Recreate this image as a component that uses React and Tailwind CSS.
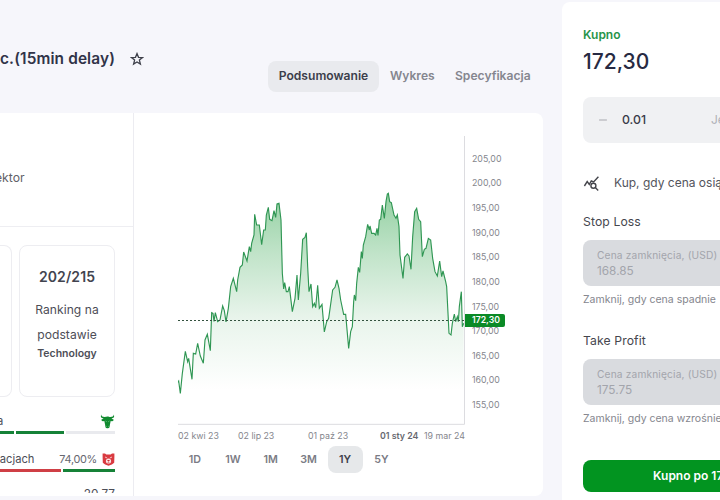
import React from "react";
import { Minus } from "lucide-react";

const PRICE_POINTS =
  "38,607 41,603 46,640 52,580 61,514 68,545 71,535 81,598 85,520 92,522 98,490 106,528 115,550 120,480 127,463 136,512 140,398 144,400 147,424 151,398 158,425 165,420 173,378 178,392 183,426 190,385 197,320 205,295 215,335 218,300 225,262 232,255 236,216 246,243 253,200 257,215 260,190 267,165 269,103 275,135 283,135 290,194 296,150 301,150 304,105 310,82 314,118 321,122 327,92 332,112 336,72 342,70 348,120 352,280 356,327 359,308 364,335 369,335 373,320 382,395 390,355 396,285 400,360 407,280 413,178 420,172 424,158 428,260 432,335 438,312 443,380 448,370 452,383 458,316 463,385 471,373 478,456 485,425 491,415 503,330 510,322 516,300 522,325 527,360 536,403 542,403 551,505 557,455 562,440 566,365 568,345 572,362 575,310 580,262 584,277 589,215 592,235 595,195 602,170 608,133 613,150 615,138 620,160 627,160 632,165 636,145 639,166 643,120 647,118 652,75 658,115 663,65 667,42 670,40 674,65 679,68 687,105 693,115 697,105 702,140 705,225 714,295 719,232 727,222 732,228 738,268 743,170 749,95 755,85 761,118 767,125 772,230 778,208 783,205 790,175 797,180 803,235 810,275 817,288 824,243 830,290 834,273 842,305 845,320 849,400 852,460 858,465 862,430 868,402 872,425 877,410 880,425 883,380 889,335 892,440 896,430";

const PRICES = [
  "205,00",
  "200,00",
  "195,00",
  "190,00",
  "185,00",
  "180,00",
  "175,00",
  "170,00",
  "165,00",
  "160,00",
  "155,00",
];

const RANGES = ["1D", "1W", "1M", "3M", "1Y", "5Y"];

function StarIcon() {
  return (
    <svg
      className="ml-[15px] h-[14px] w-[14px]"
      viewBox="0 0 14 14"
      fill="none"
      stroke="#3e404a"
      strokeWidth="1.3"
    >
      <path d="M7 1.6L8.5 5.3L12.5 5.6L9.4 8.1L10.4 12L7 9.9L3.6 12L4.6 8.1L1.5 5.6L5.5 5.3Z" />
    </svg>
  );
}

function BullIcon() {
  return (
    <svg className="h-[15px] w-[15px]" viewBox="0 0 15 15" fill="#108a2f">
      <path d="M1.3 0.6C0.2 2.6 1 4.3 3.6 4.6L1.2 5.7C1.8 7 3 7.3 4.3 7.1L5 10.2L5.5 13.2C6.2 14.6 8.8 14.6 9.5 13.2L10 10.2L10.7 7.1C12 7.3 13.2 7 13.8 5.7L11.4 4.6C14 4.3 14.8 2.6 13.7 0.6C13.6 2.4 12.4 3 10.3 3C9.3 3 8.6 2.5 7.5 2.5C6.4 2.5 5.7 3 4.7 3C2.6 3 1.4 2.4 1.3 0.6Z" />
      <path
        d="M5.6 7L6.8 7.8M9.4 7L8.2 7.8M6.3 12.3L7 12.7M8.7 12.3L8 12.7"
        stroke="#7fd094"
        strokeWidth="0.7"
      />
    </svg>
  );
}

function BearIcon() {
  return (
    <svg className="h-[13px] w-[13px]" viewBox="0 0 13 13">
      <path
        d="M0.6 0.6L3 0.5L4.3 1.5H8.7L10 0.5L12.4 0.6L12.4 3.4L12.2 9.8L9.9 11.6L6.5 12.7L3.1 11.6L0.8 9.8L0.6 3.4Z"
        fill="#d93a40"
      />
      <circle cx="6.5" cy="8" r="2.6" fill="#fbe3e3" />
      <path d="M5 7H8L6.5 8.8Z" fill="#c92f2f" />
      <path d="M5.4 10L6.5 9.5L7.6 10" stroke="#c92f2f" strokeWidth="0.6" fill="none" />
      <path d="M3 4L5.2 5M10 4L7.8 5" stroke="#fbe3e3" strokeWidth="0.8" />
    </svg>
  );
}

function TriggerIcon() {
  return (
    <svg
      className="h-[17px] w-[17px] shrink-0"
      viewBox="0 0 17 17"
      fill="none"
      stroke="#45464c"
      strokeWidth="1.4"
    >
      <path d="M1.4 11L4.2 6.6L6.3 9.4L8.3 6L10.6 7L15.4 1.8" />
      <circle cx="10.4" cy="10.8" r="2.5" />
      <path d="M12.3 12.6L15.2 15.4" />
    </svg>
  );
}

function Header() {
  return (
    <div className="flex h-[113px] shrink-0 justify-between">
      <div className="flex h-[118px] items-center">
        <h1 className="text-[15.4px] font-semibold tracking-[0.13px] text-[#303348]">
          c.(15min delay)
        </h1>
        <StarIcon />
      </div>
      <div className="mt-[61px] flex h-[31px] items-center text-[12.1px] font-semibold text-[#85868f]">
        <div className="flex h-[31px] w-[111px] items-center justify-center rounded-lg bg-[#e9eaee] text-[#3c3e4b]">
          Podsumowanie
        </div>
        <div className="ml-[11px] w-[45px]">Wykres</div>
        <div className="ml-5 w-[88px]">Specyfikacja</div>
      </div>
    </div>
  );
}

function Ranking() {
  return (
    <div className="flex w-[134px] shrink-0 flex-col border-r border-[#ececf1] bg-white">
      <div className="-ml-[5px] flex h-[114px] items-center border-b border-[#eeeef2] pt-[18px] text-[12.2px] text-[#5f6068]">
        ektor
      </div>
      <div className="mt-[18px] flex h-[152px] gap-[7px]">
        <div className="w-3 rounded-r-lg border border-l-0 border-[#ededf1]"></div>
        <div className="flex w-24 flex-col items-center rounded-lg border border-[#ededf1] pt-[20px] text-[#4d4e57]">
          <div className="text-[14px] leading-[22px] font-semibold tracking-[0.1px] text-[#42444f]">
            202/215
          </div>
          <div className="mt-[10px] w-[70px] text-center text-[12.1px] leading-[24.5px] tracking-[0.05px]">
            Ranking na podstawie
          </div>
          <div className="text-[10.5px] leading-[13px] font-semibold">Technology</div>
        </div>
      </div>
      <div className="mt-[15px] flex w-[115px] flex-col text-[11.2px] text-[#4d4e57]">
        <div className="-ml-[3px] flex h-[19px] items-center justify-between">
          <span>a</span>
          <BullIcon />
        </div>
        <div className="flex h-[3px] gap-[2px] bg-white">
          <div className="w-[14px] bg-[#168238]"></div>
          <div className="w-12 bg-[#168238]"></div>
          <div className="flex-1 bg-[#e9eaee]"></div>
        </div>
        <div className="mt-[15px] flex h-5 items-center">
          <span className="-ml-[10px] flex-1">macjach</span>
          <span className="mr-[5px] text-[10.9px] tracking-[-0.3px] text-[#66676f]">74,00%</span>
          <BearIcon />
        </div>
        <div className="flex h-[3px] gap-[2px]">
          <div className="w-[61px] bg-[#cf3f45]"></div>
          <div className="flex-1 bg-[#168238]"></div>
        </div>
        <div className="mt-4 h-[5px] overflow-hidden text-right text-[11.8px] leading-[12px]">
          20,77
        </div>
      </div>
    </div>
  );
}

function Chart() {
  return (
    <div className="flex flex-1 flex-col rounded-r-lg bg-white pt-[23px] pl-[44px]">
      <div className="flex h-[289px]">
        <svg
          className="h-[289px] w-[287px] shrink-0"
          viewBox="39 -132 861 867"
          preserveAspectRatio="none"
        >
          <defs>
            <linearGradient id="area" x1="0" y1="0" x2="0" y2="1">
              <stop offset="0" stopColor="#93d0a2" />
              <stop offset="0.3" stopColor="#c2e4ca" />
              <stop offset="0.6" stopColor="#e8f4eb" />
              <stop offset="0.95" stopColor="#ffffff" />
            </linearGradient>
          </defs>
          <polygon points={`38,660 ${PRICE_POINTS} 896,660`} fill="url(#area)" />
          <polyline points={PRICE_POINTS} fill="none" stroke="#2f9653" strokeWidth="3.4" />
          <path d="M39 421.5H897" stroke="#33513e" strokeWidth="3" strokeDasharray="6 6" />
          <path d="M38 733H898.5V-132" fill="none" stroke="#dcdce0" strokeWidth="3" />
        </svg>
        <div className="relative flex flex-col pt-[10px] pl-[7px] text-[8.8px] text-[#85868d]">
          {PRICES.map((price) => (
            <div key={price} className="flex h-[24.65px] items-center">
              {price}
            </div>
          ))}
          <div className="absolute top-[178px] left-0 flex h-[13px] w-10 items-center rounded-r-[2px] bg-[#0a8a26] pl-[7px] text-[8.7px] font-semibold text-white">
            172,30
          </div>
        </div>
      </div>
      <div className="mt-[4px] flex h-[14px] items-center text-[8.8px] text-[#85868d]">
        <span className="w-[60px]">02 kwi 23</span>
        <span className="w-[70px]">02 lip 23</span>
        <span className="w-[72px]">01 paź 23</span>
        <span className="w-11 font-semibold whitespace-nowrap text-[#67686f]">01 sty 24</span>
        <span className="whitespace-nowrap">19 mar 24</span>
      </div>
      <div className="mt-[3px] -ml-[2px] flex h-[27px] pt-px text-[10.7px] font-semibold text-[#7b7c85]">
        {RANGES.map((range) => (
          <div
            key={range}
            className={
              range === "1Y"
                ? "-mt-px flex w-[35px] items-center justify-center rounded-lg bg-[#e6e8ea] pt-px text-[#3e404a]"
                : "flex w-[37.9px] items-center justify-center"
            }
          >
            {range}
          </div>
        ))}
      </div>
    </div>
  );
}

function PriceField({ title, value, hint }) {
  return (
    <div className="flex flex-col">
      <div className="text-[12.2px] leading-[18px] tracking-[0.1px] text-[#45464e]">{title}</div>
      <div className="mt-[9px] flex h-[46px] flex-col justify-center rounded-l-lg bg-[#d9dbdf] pl-[14px] text-[#a3a5ac]">
        <span className="text-[10.2px] leading-[15px] tracking-[0.15px] whitespace-nowrap">
          Cena zamknięcia, (USD)
        </span>
        <span className="text-[11.8px] leading-[16px]">{value}</span>
      </div>
      <div className="mt-[6px] text-[10.5px] leading-[16px] whitespace-nowrap text-[#85868e]">
        {hint}
      </div>
    </div>
  );
}

function OrderPanel() {
  return (
    <div className="mt-[2px] flex w-[158px] shrink-0 flex-col overflow-hidden rounded-tl-lg bg-white pt-6 pl-[21px]">
      <div className="text-[12px] leading-[18px] font-semibold text-[#27944a]">Kupno</div>
      <div className="mt-[5px] text-[21px] leading-[26px] font-medium text-[#272a42]">172,30</div>
      <div className="mt-[22px] flex h-[46px] items-center rounded-l-lg bg-[#f0f1f3] pl-[14px]">
        <Minus className="h-3 w-3 text-[#a7a8ae]" strokeWidth={2} />
        <span className="ml-[13px] text-[12.3px] font-medium text-[#393b49]">0.01</span>
        <span className="ml-auto w-[9px] text-[12px] text-[#b1b2b8]">Jednostki</span>
      </div>
      <div className="mt-[30px] flex h-5 items-center">
        <TriggerIcon />
        <span className="ml-[14px] text-[12px] whitespace-nowrap text-[#53545c]">
          Kup, gdy cena osiągnie
        </span>
      </div>
      <div className="mt-5 flex flex-col gap-6">
        <PriceField title="Stop Loss" value="168.85" hint="Zamknij, gdy cena spadnie" />
        <PriceField title="Take Profit" value="175.75" hint="Zamknij, gdy cena wzrośnie" />
      </div>
      <div className="mt-[33px] flex h-8 shrink-0 items-center rounded-l-lg bg-[#029420] pl-[70px] text-[12px] font-semibold whitespace-nowrap text-white">
        Kupno po 172,30
      </div>
    </div>
  );
}

export default function App() {
  return (
    <div className="flex h-[500px] w-[720px] justify-between overflow-hidden bg-[#f6f6fb] font-['Inter',sans-serif]">
      <div className="flex w-[543px] shrink-0 flex-col">
        <Header />
        <div className="flex h-[383px]">
          <Ranking />
          <Chart />
        </div>
      </div>
      <OrderPanel />
    </div>
  );
}
